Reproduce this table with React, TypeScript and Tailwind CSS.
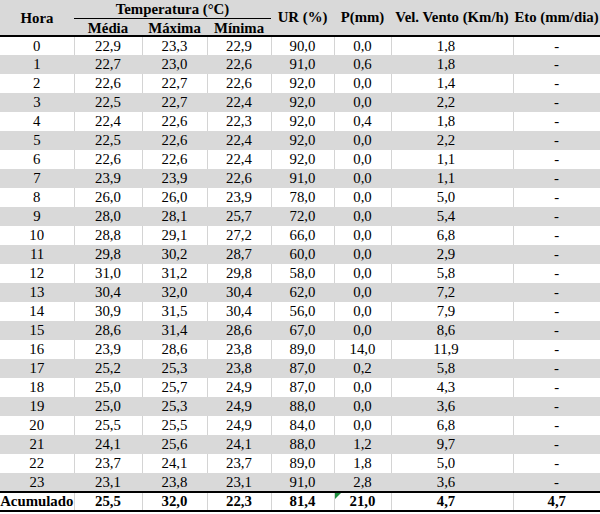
import React from "react";

// Dados horários: [hora, média, máxima, mínima, UR, P, vento]
type Row = [string, string, string, string, string, string, string];

const rows: Row[] = [
    ["0", "22,9", "23,3", "22,9", "90,0", "0,0", "1,8"],
    ["1", "22,7", "23,0", "22,6", "91,0", "0,6", "1,8"],
    ["2", "22,6", "22,7", "22,6", "92,0", "0,0", "1,4"],
    ["3", "22,5", "22,7", "22,4", "92,0", "0,0", "2,2"],
    ["4", "22,4", "22,6", "22,3", "92,0", "0,4", "1,8"],
    ["5", "22,5", "22,6", "22,4", "92,0", "0,0", "2,2"],
    ["6", "22,6", "22,6", "22,4", "92,0", "0,0", "1,1"],
    ["7", "23,9", "23,9", "22,6", "91,0", "0,0", "1,1"],
    ["8", "26,0", "26,0", "23,9", "78,0", "0,0", "5,0"],
    ["9", "28,0", "28,1", "25,7", "72,0", "0,0", "5,4"],
    ["10", "28,8", "29,1", "27,2", "66,0", "0,0", "6,8"],
    ["11", "29,8", "30,2", "28,7", "60,0", "0,0", "2,9"],
    ["12", "31,0", "31,2", "29,8", "58,0", "0,0", "5,8"],
    ["13", "30,4", "32,0", "30,4", "62,0", "0,0", "7,2"],
    ["14", "30,9", "31,5", "30,4", "56,0", "0,0", "7,9"],
    ["15", "28,6", "31,4", "28,6", "67,0", "0,0", "8,6"],
    ["16", "23,9", "28,6", "23,8", "89,0", "14,0", "11,9"],
    ["17", "25,2", "25,3", "23,8", "87,0", "0,2", "5,8"],
    ["18", "25,0", "25,7", "24,9", "87,0", "0,0", "4,3"],
    ["19", "25,0", "25,3", "24,9", "88,0", "0,0", "3,6"],
    ["20", "25,5", "25,5", "24,9", "84,0", "0,0", "6,8"],
    ["21", "24,1", "25,6", "24,1", "88,0", "1,2", "9,7"],
    ["22", "23,7", "24,1", "23,7", "89,0", "1,8", "5,0"],
    ["23", "23,1", "23,8", "23,1", "91,0", "2,8", "3,6"],
];

// larguras das colunas em px (Hora ... Eto)
const widths = ["w-[74px]", "w-[68px]", "w-[65px]", "w-[64px]", "w-[63px]", "w-[57px]", "w-[122px]", "w-[87px]"];

export default function App() {
    return (
        <div className="w-[600px] h-[514px] bg-white text-black text-[14.8px] leading-none font-['Liberation_Serif','Times_New_Roman',serif]">
            <table className="w-[600px] table-fixed border-collapse">
                <colgroup>
                    {widths.map((w, i) => (
                        <col key={i} className={w} />
                    ))}
                </colgroup>
                <thead className="bg-[#d9d9d9] font-bold">
                    <tr className="h-[18px]">
                        <th rowSpan={2} className="border-b-2 border-black pt-[2px] align-middle">
                            Hora
                        </th>
                        <th colSpan={3} className="border-b border-black align-middle pt-[2px]">
                            Temperatura (°C)
                        </th>
                        <th rowSpan={2} className="border-b-2 border-black align-middle">
                            UR (%)
                        </th>
                        <th rowSpan={2} className="border-b-2 border-black align-middle">
                            P(mm)
                        </th>
                        <th rowSpan={2} className="border-b-2 border-black align-middle">
                            Vel. Vento (Km/h)
                        </th>
                        <th rowSpan={2} className="border-b-2 border-black align-middle">
                            Eto (mm/dia)
                        </th>
                    </tr>
                    <tr className="h-[18px]">
                        <th className="border-b-2 border-black align-middle pt-[2px]">Média</th>
                        <th className="border-b-2 border-black align-middle pt-[2px]">Máxima</th>
                        <th className="border-b-2 border-black align-middle pt-[2px]">Mínima</th>
                    </tr>
                </thead>
                <tbody>
                    {rows.map((r, idx) => {
                        const gray = idx % 2 === 1;
                        return (
                            <tr key={r[0]} className={`h-[19px] ${gray ? "bg-[#d9d9d9]" : "bg-white"}`}>
                                {[...r, "-"].map((v, c) => (
                                    <td
                                        key={c}
                                        className={`text-center align-middle p-0 ${
                                            !gray && c < 7 ? "border-r border-[#d4d4d4]" : ""
                                        } ${c === 6 ? "pr-[12px]" : ""}`}
                                    >
                                        {v}
                                    </td>
                                ))}
                            </tr>
                        );
                    })}
                    {/* linha de totais */}
                    <tr className="h-[19px] bg-white font-bold border-t-2 border-b-2 border-black">
                        <td className="text-center align-middle border-r border-[#d4d4d4]">Acumulado</td>
                        <td className="text-center align-middle border-r border-[#d4d4d4]">25,5</td>
                        <td className="text-center align-middle border-r border-[#d4d4d4]">32,0</td>
                        <td className="text-center align-middle border-r border-[#d4d4d4]">22,3</td>
                        <td className="text-center align-middle border-r border-[#d4d4d4]">81,4</td>
                        <td className="relative text-center align-middle border-r border-[#d4d4d4]">
                            {/* marcador verde do Excel */}
                            <span className="absolute left-0 top-0 w-0 h-0 border-t-[6px] border-r-[6px] border-t-[#1e8e3e] border-r-transparent" />
                            21,0
                        </td>
                        <td className="text-center align-middle border-r border-[#d4d4d4] pr-[12px]">4,7</td>
                        <td className="text-center align-middle">4,7</td>
                    </tr>
                </tbody>
            </table>
        </div>
    );
}
